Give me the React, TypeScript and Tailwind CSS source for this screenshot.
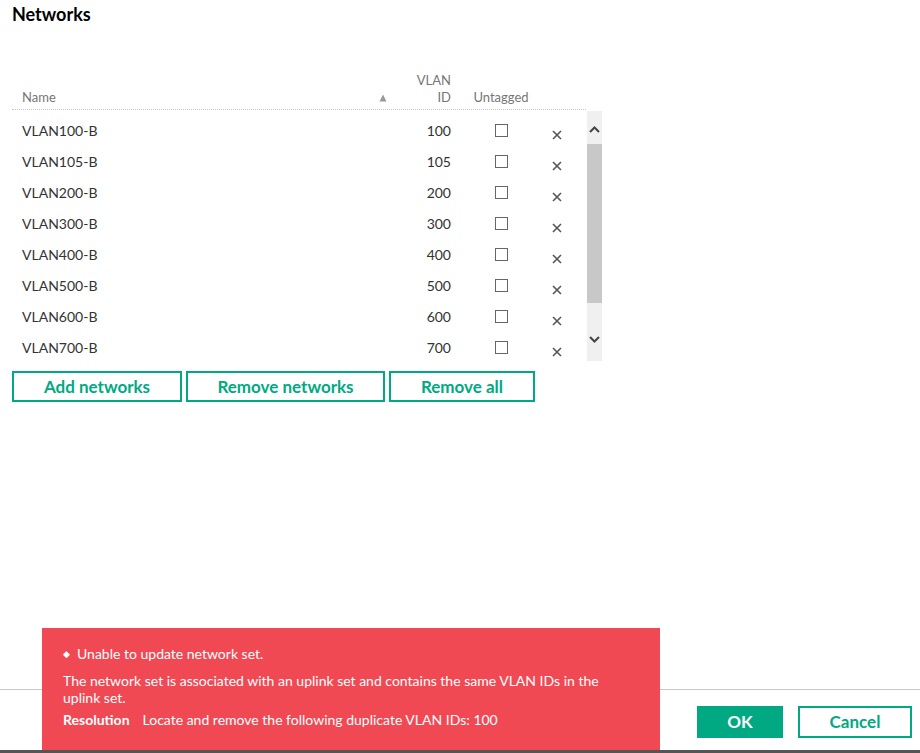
import React from 'react';

const networks = [
  { name: 'VLAN100-B', id: 100 },
  { name: 'VLAN105-B', id: 105 },
  { name: 'VLAN200-B', id: 200 },
  { name: 'VLAN300-B', id: 300 },
  { name: 'VLAN400-B', id: 400 },
  { name: 'VLAN500-B', id: 500 },
  { name: 'VLAN600-B', id: 600 },
  { name: 'VLAN700-B', id: 700 },
];

const cols = 'grid grid-cols-[380px_60px_98px_14px_1fr]';

function XIcon() {
  return (
    <svg width="10" height="10" viewBox="0 0 10 10" className="block">
      <path d="M1 1 L9 9 M9 1 L1 9" stroke="#555" strokeWidth="1.6" />
    </svg>
  );
}

function Chevron({ up }: { up?: boolean }) {
  return (
    <svg width="11" height="7" viewBox="0 0 11 7" className="block">
      <path d={up ? 'M1 6 L5.5 1.5 L10 6' : 'M1 1 L5.5 5.5 L10 1'} fill="none" stroke="#444" strokeWidth="2" />
    </svg>
  );
}

export default function App() {
  return (
    <div className="relative h-[753px] w-[920px] overflow-hidden bg-white font-['Lato','Liberation_Sans',sans-serif] text-[#333]">
      <div className="flex h-full flex-col">
        <h1 className="pl-3 pt-[3px] text-[18px] font-bold leading-[22px] text-black">Networks</h1>

        {/* Table */}
        <div className="ml-3 mt-[47px] w-[590px]">
          <div className={`${cols} w-[574px] border-b border-dotted border-[#c8c8c8] pb-[3px] text-[13px] leading-[17px] text-[#767676]`}>
            <div className="flex items-end justify-between pl-[10px] pr-[5px]">
              <span>Name</span>
              <svg width="8" height="8" viewBox="0 0 8 8" className="mb-[4px] block">
                <path d="M4 0.5 L7.5 7.5 L0.5 7.5 Z" fill="#999" />
              </svg>
            </div>
            <div className="pr-[1px] text-right">
              VLAN
              <br />
              ID
            </div>
            <div className="self-end text-center">Untagged</div>
            <div />
            <div />
          </div>

          <div className="mt-[1px] flex h-[250px]">
            <div className="h-full w-[574px] overflow-hidden pt-[4px]">
              {networks.map((n) => (
                <div key={n.name} className={`${cols} h-[31px] items-center text-[14px]`}>
                  <div className="pl-[10px]">{n.name}</div>
                  <div className="pr-[1px] text-right">{n.id}</div>
                  <div className="flex justify-center">
                    <span className="block h-[13px] w-[13px] border border-[#666] bg-white" />
                  </div>
                  <div className="flex justify-center pt-[8px]">
                    <XIcon />
                  </div>
                  <div />
                </div>
              ))}
            </div>
            <div className="ml-[1px] flex h-full w-[15px] flex-col bg-[#f0f0f0]">
              <div className="flex h-[33px] items-center justify-center pt-[3px]">
                <Chevron up />
              </div>
              <div className="h-[159px] bg-[#c8c8c8]" />
              <div className="flex flex-1 items-center justify-center pt-[14px]">
                <Chevron />
              </div>
            </div>
          </div>

          <div className="mt-[10px] flex gap-[4px]">
            <button className="h-[31px] w-[170px] border-2 border-[#01a982] text-[17px] font-bold text-[#01a982]">Add networks</button>
            <button className="h-[31px] w-[199px] border-2 border-[#01a982] text-[17px] font-bold text-[#01a982]">Remove networks</button>
            <button className="h-[31px] w-[146px] border-2 border-[#01a982] text-[17px] font-bold text-[#01a982]">Remove all</button>
          </div>
        </div>

        <div className="flex-1" />

        {/* Footer */}
        <div className="border-t border-[#c8c8c8]">
          <div className="flex h-[60px] justify-end gap-[15px] pr-[8px] pt-[16px]">
            <button className="h-[32px] w-[86px] bg-[#01a982] text-[17px] font-bold text-white">OK</button>
            <button className="h-[32px] w-[114px] border-2 border-[#01a982] text-[17px] font-bold text-[#01a982]">Cancel</button>
          </div>
          <div className="h-[3px] bg-[#555]" />
        </div>
      </div>

      {/* Error banner */}
      <div className="absolute bottom-[3px] left-[42px] h-[122px] w-[618px] bg-[#f04953] px-[21px] pt-[17px] text-[14px] leading-[17px] text-white">
        <div className="flex items-center gap-[7px]">
          <span className="text-[9px]">◆</span>
          <span>Unable to update network set.</span>
        </div>
        <p className="mt-[10px] pr-[30px]">
          The network set is associated with an uplink set and contains the same VLAN IDs in the uplink set.
        </p>
        <div className="mt-[5px] flex gap-[13px]">
          <span className="font-bold">Resolution</span>
          <span>Locate and remove the following duplicate VLAN IDs: 100</span>
        </div>
      </div>
    </div>
  );
}
